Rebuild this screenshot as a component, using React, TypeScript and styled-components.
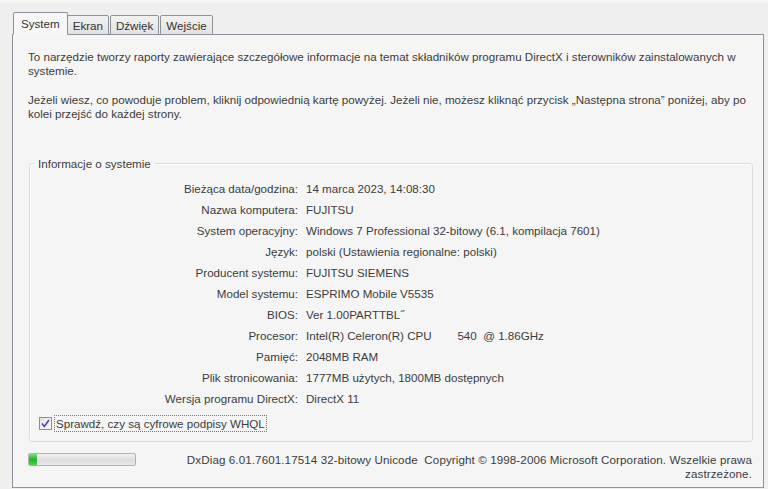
import styled, { createGlobalStyle } from "styled-components";

const GlobalStyle = createGlobalStyle`
  html, body {
    margin: 0;
    padding: 0;
    background: #efefef;
  }
  body {
    font-family: "Liberation Sans", Arial, sans-serif;
    font-size: 11.6px;
    color: #3c3c3c;
  }
`;

const Window = styled.div`
  width: 768px;
  height: 489px;
  box-sizing: border-box;
  padding: 12px 4px 1px 12px;
  display: flex;
  flex-direction: column;
  background: linear-gradient(#f7f7f7 0px, #efefef 4px);
`;

const TabStrip = styled.div`
  display: flex;
  align-items: flex-end;
  height: 23px;
  padding-left: 1px;
  position: relative;
  z-index: 1;
  margin-bottom: -1px;
`;

const Tab = styled.div<{ $active?: boolean }>`
  box-sizing: border-box;
  height: ${(p) => (p.$active ? "23px" : "20px")};
  padding: 0 ${(p) => (p.$active ? "7px" : "5px")};
  margin-right: ${(p) => (p.$active ? "-1px" : "1px")};
  display: flex;
  align-items: center;
  border: 1px solid #8d939b;
  border-bottom: ${(p) => (p.$active ? "1px solid #f7f7f7" : "1px solid #8d939b")};
  border-radius: 2px 2px 0 0;
  background: ${(p) =>
    p.$active ? "#f7f7f7" : "linear-gradient(#f2f2f2, #e2e2e2)"};
  color: #333;
`;

const TabPanel = styled.div`
  flex: 1;
  border: 1px solid #8d939b;
  background: #f5f5f5;
  padding: 15px 10px 0 15px;
  display: flex;
  flex-direction: column;
`;

const Intro = styled.p`
  margin: 0 0 15px 0;
  line-height: 14px;
`;

const GroupBox = styled.fieldset`
  margin: 21px 0 0 1px;
  padding: 8px 0 10px 0;
  border: 1px solid #dadada;
  border-radius: 3px;
  box-shadow: inset 1px 1px 0 #ffffff;
`;

const Legend = styled.legend`
  margin-left: 4px;
  padding: 0 4px;
  color: #3c3c3c;
`;

const InfoGrid = styled.div`
  display: grid;
  grid-template-columns: 268px 1fr;
  column-gap: 8px;
  grid-auto-rows: 21px;
  align-items: center;
`;

const Label = styled.div`
  text-align: right;
  white-space: nowrap;
`;

const Value = styled.div`
  white-space: pre;
`;

const CheckRow = styled.label`
  display: flex;
  align-items: center;
  gap: 3px;
  margin: 7px 0 0 9px;
`;

const CheckBox = styled.span`
  width: 11px;
  height: 11px;
  border: 1px solid #8f8f8f;
  background: linear-gradient(135deg, #e4e4e4, #fafafa);
  display: flex;
  align-items: center;
  justify-content: center;
`;

const CheckText = styled.span`
  outline: 1px dotted #777;
  outline-offset: 0;
  padding: 0 1px;
  line-height: 15px;
`;

const Footer = styled.div`
  display: flex;
  justify-content: space-between;
  align-items: flex-start;
  margin-top: 10px;
  padding-right: 1px;
`;

const Progress = styled.div`
  width: 106px;
  height: 11px;
  margin-top: 1px;
  border: 1px solid #b2b2b2;
  border-radius: 2px;
  background: linear-gradient(#f3f3f3, #dcdcdc 55%, #e8e8e8);
  overflow: hidden;
`;

const ProgressFill = styled.div`
  height: 100%;
  background: linear-gradient(#7be27b, #22b822 50%, #4ccf4c);
`;

const FooterText = styled.div`
  text-align: right;
  line-height: 14px;
  margin-top: 1px;
  letter-spacing: 0.1px;
`;

const rows: [string, string][] = [
  ["Bieżąca data/godzina:", "14 marca 2023, 14:08:30"],
  ["Nazwa komputera:", "FUJITSU"],
  ["System operacyjny:", "Windows 7 Professional 32-bitowy (6.1, kompilacja 7601)"],
  ["Język:", "polski (Ustawienia regionalne: polski)"],
  ["Producent systemu:", "FUJITSU SIEMENS"],
  ["Model systemu:", "ESPRIMO Mobile V5535"],
  ["BIOS:", "Ver 1.00PARTTBL\u02DD"],
  ["Procesor:", "Intel(R) Celeron(R) CPU        540  @ 1.86GHz"],
  ["Pamięć:", "2048MB RAM"],
  ["Plik stronicowania:", "1777MB użytych, 1800MB dostępnych"],
  ["Wersja programu DirectX:", "DirectX 11"],
];

const App: React.FC = () => {
  const progress = 8;
  return (
    <>
      <GlobalStyle />
      <Window>
        <TabStrip>
          <Tab $active>System</Tab>
          <Tab>Ekran</Tab>
          <Tab>Dźwięk</Tab>
          <Tab>Wejście</Tab>
        </TabStrip>
        <TabPanel>
          <Intro>
            To narzędzie tworzy raporty zawierające szczegółowe informacje na temat
            składników programu DirectX i sterowników zainstalowanych w systemie.
          </Intro>
          <Intro>
            Jeżeli wiesz, co powoduje problem, kliknij odpowiednią kartę powyżej. Jeżeli
            nie, możesz kliknąć przycisk „Następna strona” poniżej, aby po kolei przejść
            do każdej strony.
          </Intro>
          <GroupBox>
            <Legend>Informacje o systemie</Legend>
            <InfoGrid>
              {rows.map(([label, value]) => (
                <>
                  <Label key={label}>{label}</Label>
                  <Value key={label + "v"}>{value}</Value>
                </>
              ))}
            </InfoGrid>
            <CheckRow>
              <CheckBox>
                <svg width="9" height="9" viewBox="0 0 9 9">
                  <path
                    d="M1 4.5 L3.3 7.5 L8 1"
                    fill="none"
                    stroke="#4a4ab0"
                    strokeWidth="1.6"
                  />
                </svg>
              </CheckBox>
              <CheckText>Sprawdź, czy są cyfrowe podpisy WHQL</CheckText>
            </CheckRow>
          </GroupBox>
          <Footer>
            <Progress>
              <ProgressFill style={{ width: `${progress}%` }} />
            </Progress>
            <FooterText>
              DxDiag 6.01.7601.17514 32-bitowy Unicode&nbsp; Copyright © 1998-2006
              Microsoft Corporation. Wszelkie prawa
              <br />
              zastrzeżone.
            </FooterText>
          </Footer>
        </TabPanel>
      </Window>
    </>
  );
};

export default App;
